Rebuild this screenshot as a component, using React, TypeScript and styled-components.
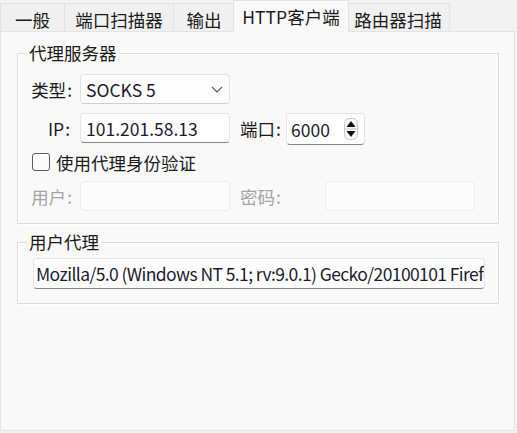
import React from 'react';
import styled, { createGlobalStyle } from 'styled-components';

const Global = createGlobalStyle`
  html, body { margin: 0; padding: 0; background: #f2f2f2; }
  body {
    font-family: "Noto Sans CJK SC", "Noto Sans", sans-serif;
    font-size: 17.5px;
    color: #1a1a1a;
  }
  * { box-sizing: border-box; }
`;

const Window = styled.div`
  width: 517px;
  height: 433px;
  display: flex;
  flex-direction: column;
`;

const TabStrip = styled.div`
  display: flex;
  align-items: flex-end;
  height: 31px;
  position: relative;
  z-index: 1;
`;

const Tab = styled.div<{ $w: number; $active?: boolean }>`
  width: ${p => p.$w}px;
  height: ${p => (p.$active ? 32 : 28)}px;
  margin-bottom: ${p => (p.$active ? -1 : 0)}px;
  margin-left: ${p => (p.$active ? -2 : -1)}px;
  margin-right: ${p => (p.$active ? -2 : 0)}px;
  &:first-child { margin-left: 0; }
  background: ${p => (p.$active ? '#f9f9f9' : '#f0f0f0')};
  border: 1px solid #e3e3e3;
  border-bottom: none;
  display: flex;
  justify-content: center;
  align-items: center;
  padding-top: ${p => (p.$active ? 0 : 4)}px;
  position: relative;
  z-index: ${p => (p.$active ? 2 : 1)};
  white-space: nowrap;
  line-height: 1;
`;

const Panel = styled.div`
  width: 515px;
  height: 400px;
  border: 1px solid #e3e3e3;
  background: #f9f9f9;
  padding: 21px 0 0 16px;
  display: flex;
  flex-direction: column;
  gap: 18px;
`;

const Group = styled.section<{ $h: number }>`
  position: relative;
  width: 482px;
  height: ${p => p.$h}px;
  border: 1px solid #dcdcdc;
  box-shadow: inset 1px 1px 0 #ffffff, 1px 1px 0 #ffffff;
  display: flex;
  flex-direction: column;
`;

const GroupTitle = styled.div`
  position: absolute;
  left: 9px;
  top: -12px;
  padding: 0 2px;
  background: #f9f9f9;
  line-height: 22px;
`;

const GroupBody = styled.div<{ $pt: number; $pl?: number }>`
  padding-top: ${p => p.$pt}px;
  padding-left: ${p => p.$pl ?? 0}px;
  display: flex;
  flex-direction: column;
`;

const Row = styled.div<{ $mt?: number; $pl?: number }>`
  display: flex;
  align-items: flex-start;
  margin-top: ${p => p.$mt ?? 0}px;
  padding-left: ${p => p.$pl ?? 0}px;
`;

const Label = styled.div<{ $w: number; $right?: boolean; $ml?: number; $disabled?: boolean; $pr?: number }>`
  width: ${p => p.$w}px;
  height: 30px;
  margin-left: ${p => p.$ml ?? 0}px;
  display: flex;
  align-items: center;
  justify-content: ${p => (p.$right ? 'flex-end' : 'flex-start')};
  padding-right: ${p => p.$pr ?? (p.$right ? 8 : 0)}px;
  color: ${p => (p.$disabled ? '#a3a3a3' : '#1a1a1a')};
  white-space: nowrap;
`;

const Colon = styled.span`
  margin-left: 1px;
`;

const TextBox = styled.div<{ $w: number; $h?: number; $disabled?: boolean; $pl?: number; $tight?: boolean }>`
  width: ${p => p.$w}px;
  height: ${p => p.$h ?? 30}px;
  background: ${p => (p.$disabled ? '#fcfcfc' : '#ffffff')};
  border: 1px solid ${p => (p.$disabled ? '#ebebeb' : '#e5e5e5')};
  border-bottom-color: ${p => (p.$disabled ? '#ebebeb' : '#868686')};
  border-radius: 4px;
  padding-left: ${p => p.$pl ?? 5}px;
  display: flex;
  align-items: center;
  overflow: hidden;
  white-space: nowrap;
  color: #1b1b2e;
  letter-spacing: ${p => (p.$tight ? '-0.6px' : 'normal')};
`;

const Select = styled.div`
  width: 150px;
  height: 30px;
  background: #fdfdfd;
  border: 1px solid #e3e3e3;
  border-bottom-color: #cfcfcf;
  border-radius: 4px;
  padding: 0 6px 0 5px;
  display: flex;
  align-items: center;
  justify-content: space-between;
  color: #1b1b2e;
`;

const Spin = styled(TextBox)`
  justify-content: space-between;
  padding-right: 6px;
`;

const CheckRow = styled.label`
  display: flex;
  align-items: center;
  gap: 6px;
  height: 22px;
`;

const CheckBox = styled.span`
  width: 18px;
  height: 18px;
  border: 1px solid #5c5c5c;
  border-radius: 3px;
  background: #fbfbfb;
`;

const Chevron = () => (
  <svg width="12" height="7" viewBox="0 0 12 7">
    <polyline points="1,1 6,6 11,1" fill="none" stroke="#5a5a5a" strokeWidth="1.1" />
  </svg>
);

const SpinIcon = () => (
  <svg width="14" height="22" viewBox="0 0 14 22">
    <rect x="0.5" y="0.5" width="13" height="21" rx="5" fill="#fafafa" stroke="#c4c4c4" />
    <line x1="1" y1="11" x2="13" y2="11" stroke="#c4c4c4" />
    <polygon points="7,3 2.5,9 11.5,9" fill="#111" />
    <polygon points="7,19 2.5,13 11.5,13" fill="#111" />
  </svg>
);

export default function App() {
  return (
    <>
      <Global />
      <Window>
        <TabStrip>
          <Tab $w={65}>一般</Tab>
          <Tab $w={110}>端口扫描器</Tab>
          <Tab $w={62}>输出</Tab>
          <Tab $w={116} $active>HTTP客户端</Tab>
          <Tab $w={104}>路由器扫描</Tab>
        </TabStrip>
        <Panel>
          <Group $h={171}>
            <GroupTitle>代理服务器</GroupTitle>
            <GroupBody $pt={20}>
              <Row>
                <Label $w={62} $right>类型<Colon>:</Colon></Label>
                <Select>
                  <span>SOCKS 5</span>
                  <Chevron />
                </Select>
              </Row>
              <Row $mt={9}>
                <Label $w={62} $right $pr={10}>IP<Colon>:</Colon></Label>
                <TextBox $w={150}>101.201.58.13</TextBox>
                <Label $w={46} $ml={10}>端口<Colon>:</Colon></Label>
                <Spin $w={79} $h={32} $pl={4}>
                  <span>6000</span>
                  <SpinIcon />
                </Spin>
              </Row>
              <Row $mt={6} $pl={14}>
                <CheckRow>
                  <CheckBox />
                  <span>使用代理身份验证</span>
                </CheckRow>
              </Row>
              <Row $mt={8}>
                <Label $w={62} $right $disabled>用户<Colon>:</Colon></Label>
                <TextBox $w={150} $disabled />
                <Label $w={85} $ml={10} $disabled>密码<Colon>:</Colon></Label>
                <TextBox $w={150} $disabled />
              </Row>
            </GroupBody>
          </Group>
          <Group $h={62}>
            <GroupTitle>用户代理</GroupTitle>
            <GroupBody $pt={15} $pl={15}>
              <TextBox $w={452} $h={31} $pl={2} $tight>
                Mozilla/5.0 (Windows NT 5.1; rv:9.0.1) Gecko/20100101 Firefox/9.0.1
              </TextBox>
            </GroupBody>
          </Group>
        </Panel>
      </Window>
    </>
  );
}
